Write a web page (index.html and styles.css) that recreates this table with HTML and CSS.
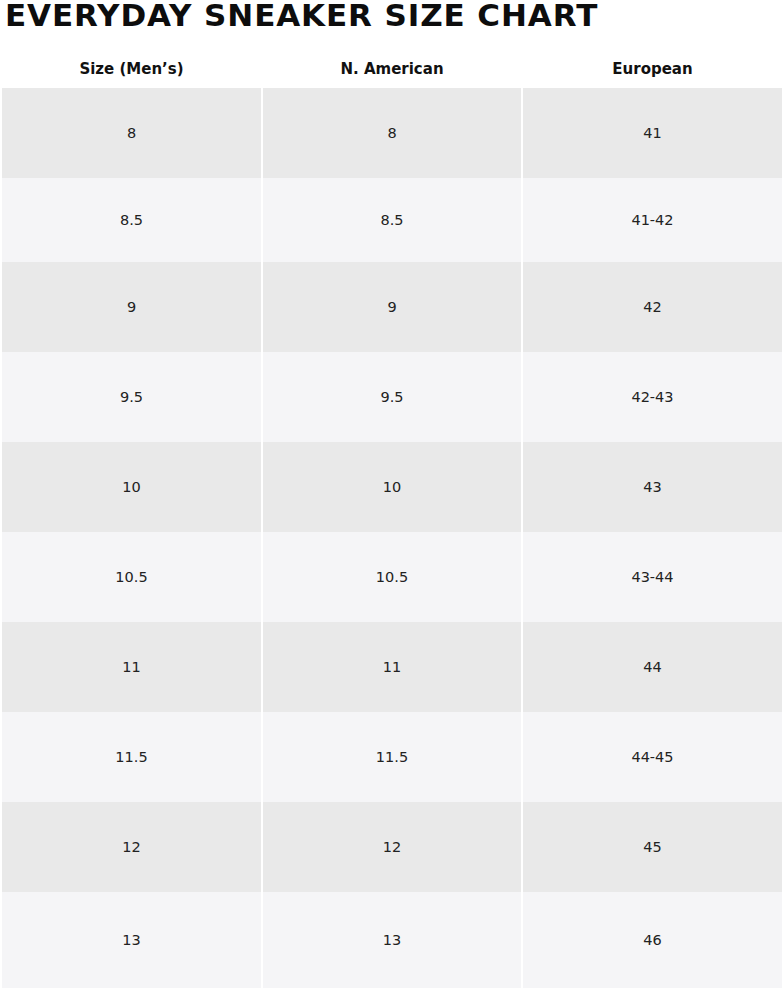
FILE: index.html
```html
<!DOCTYPE html>
<html>
<head>
<meta charset="utf-8">
<link rel="stylesheet" href="styles.css">
</head>
<body>
<div class="chart">
  <h1 class="title">EVERYDAY SNEAKER SIZE CHART</h1>
  <div class="row head">
    <div class="cell">Size (Men’s)</div>
    <div class="cell">N. American</div>
    <div class="cell">European</div>
  </div>
  <div class="row dark h90"><div class="cell">8</div><div class="cell">8</div><div class="cell">41</div></div>
  <div class="row light h84"><div class="cell">8.5</div><div class="cell">8.5</div><div class="cell">41-42</div></div>
  <div class="row dark h90"><div class="cell">9</div><div class="cell">9</div><div class="cell">42</div></div>
  <div class="row light h90"><div class="cell">9.5</div><div class="cell">9.5</div><div class="cell">42-43</div></div>
  <div class="row dark h90"><div class="cell">10</div><div class="cell">10</div><div class="cell">43</div></div>
  <div class="row light h90"><div class="cell">10.5</div><div class="cell">10.5</div><div class="cell">43-44</div></div>
  <div class="row dark h90"><div class="cell">11</div><div class="cell">11</div><div class="cell">44</div></div>
  <div class="row light h90"><div class="cell">11.5</div><div class="cell">11.5</div><div class="cell">44-45</div></div>
  <div class="row dark h90"><div class="cell">12</div><div class="cell">12</div><div class="cell">45</div></div>
  <div class="row light h96"><div class="cell">13</div><div class="cell">13</div><div class="cell">46</div></div>
</div>
</body>
</html>
```
FILE: styles.css
```css
html, body {
  margin: 0;
  padding: 0;
  background: #ffffff;
}
body {
  font-family: "DejaVu Sans", "Noto Sans", sans-serif;
  color: #1a1a1a;
}
.chart {
  width: 780px;
  padding: 0 2px;
}
.title {
  margin: 0;
  padding: 0 0 0 3px;
  height: 50px;
  font-size: 31px;
  line-height: 30px;
  font-weight: 800;
  color: #0d0d0d;
  letter-spacing: 0.9px;
  white-space: nowrap;
}
.row {
  display: grid;
  grid-template-columns: 259px 258px 259px;
  column-gap: 2px;
}
.cell {
  display: flex;
  align-items: center;
  justify-content: center;
  font-size: 14.5px;
  color: #222;
}
.head {
  height: 38px;
}
.head .cell {
  font-weight: 700;
  font-size: 15px;
  color: #111;
}
.dark .cell { background: #e9e9e9; }
.light .cell { background: #f5f5f7; }
.h84 { height: 84px; }
.h90 { height: 90px; }
.h96 { height: 96px; }
```
